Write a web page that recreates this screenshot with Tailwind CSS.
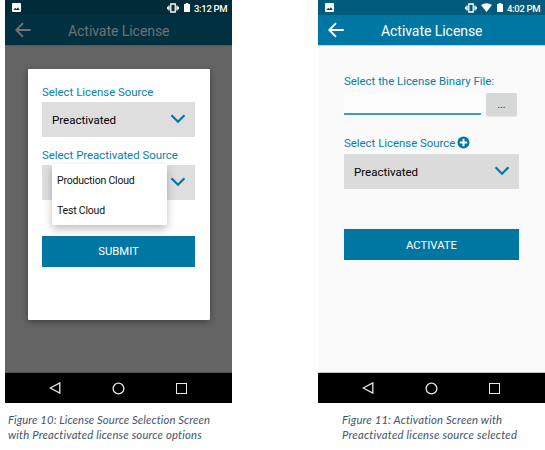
<!DOCTYPE html>
<html lang="en">
<head>
<meta charset="utf-8">
<title>Activate License</title>
<script src="https://cdn.jsdelivr.net/npm/@tailwindcss/browser@4"></script>
</head>
<body class="w-[545px] h-[450px] overflow-hidden bg-white font-[Roboto,sans-serif] whitespace-nowrap">
<svg class="hidden">
  <symbol id="photo" viewBox="0 0 9 9"><rect width="9" height="9" rx="1" fill="currentColor"/><path d="M1.4 7 3.2 4.8l1.2 1.3L6 4.2 7.7 7z" fill="#003f55"/></symbol>
  <symbol id="vibrate" viewBox="0 0 12 10"><path d="M3.8 1h4.4v8H3.8zM2 2.5v5M10 2.5v5M.6 3.8v2.4M11.4 3.8v2.4" fill="none" stroke="currentColor" stroke-width="1.3"/></symbol>
  <symbol id="battery" viewBox="0 0 6 9"><path d="M0 1h1.7V0h2.6v1H6v8H0z" fill="currentColor"/></symbol>
  <symbol id="back" viewBox="0 0 16 16"><path d="M15.7 8H1.5M8 1.2 1.3 8 8 14.8" fill="none" stroke="currentColor" stroke-width="1.9"/></symbol>
  <symbol id="chevron" viewBox="0 0 16 10"><path d="M1.5 1.3 8 7.8l6.5-6.5" fill="none" stroke="currentColor" stroke-width="2.2"/></symbol>
  <symbol id="navback" viewBox="0 0 12 12"><path d="M10.8.9v10.2L1.2 6z" fill="none" stroke="currentColor" stroke-width="1.3"/></symbol>
</svg>
<main class="flex justify-between pl-[5px]">
  <section class="w-[227px]">
    <div class="flex h-[403px] flex-col">
      <div class="flex h-[15px] items-center bg-[#012b39] pl-[7px] pr-[5px] text-white">
        <svg class="h-[9px] w-[9px]"><use href="#photo"/></svg>
        <svg class="ml-auto h-[10px] w-[12px]"><use href="#vibrate"/></svg>
        <svg class="ml-[5px] mr-[4px] h-[9px] w-[6px]"><use href="#battery"/></svg>
        <span class="w-[33px] pt-[2px] text-[9.5px] font-medium leading-[14px] tracking-[-0.3px]">3:12 PM</span>
      </div>
      <div class="flex h-[30px] items-center bg-[#013141] pl-[10px] text-[#6f7374]">
        <svg class="h-4 w-4"><use href="#back"/></svg>
        <h1 class="ml-[37px] pt-px text-[14px] leading-5 tracking-[-0.05px]">Activate License</h1>
      </div>
      <div class="flex-1 border-t border-b border-t-[#53595b] border-b-[#505050] bg-[#646464] pl-[22.5px] pt-[22.5px]">
        <div class="flex h-[251px] w-[182px] flex-col rounded-[1px] bg-white px-[14.5px] pt-[17px] shadow-[0_2px_6px_rgba(0,0,0,.35)]">
          <label class="h-[16.5px] text-[11.4px] leading-[12px] text-[#087fa8]">Select License Source</label>
          <div class="flex h-[35px] items-center justify-between bg-[#dedede] pl-[10px] pr-[9px] text-[11.5px] text-black"><span class="pt-[2px]">Preactivated</span><svg class="mb-px h-[10px] w-4 text-[#0077a2]"><use href="#chevron"/></svg></div>
          <label class="mt-[12px] h-[16px] text-[11.4px] leading-[12px] text-[#087fa8]">Select Preactivated Source</label>
          <div class="relative flex h-[35px] items-center justify-end bg-[#dedede] pr-[9px]">
            <svg class="mb-[2px] h-[10px] w-4 text-[#0077a2]"><use href="#chevron"/></svg>
            <ul class="absolute -top-px left-[10px] h-[61px] w-[115px] rounded-[1px] bg-white px-[5px] text-[10.5px] leading-[30px] tracking-[-0.2px] text-[#111] shadow-[0_4px_8px_rgba(0,0,0,.25)]"><li class="pt-[2px]">Production Cloud</li><li>Test Cloud</li></ul>
          </div>
          <button class="mt-[36px] h-[30.5px] bg-[#0077a2] pt-[3px] text-[11.3px] text-white">SUBMIT</button>
        </div>
      </div>
      <nav class="flex h-[30px] items-center bg-black pl-[44px] text-[#e8e8e8]">
        <svg class="h-3 w-3"><use href="#navback"/></svg>
        <svg class="ml-[51px] h-[13px] w-[13px]" viewBox="0 0 13 13"><circle cx="6.5" cy="6.5" r="5.4" fill="none" stroke="currentColor" stroke-width="1.3"/></svg>
        <span class="ml-[51px] h-[11px] w-[11px] border border-current"></span>
      </nav>
    </div>
    <p class="pl-[3px] pt-[9px] font-[Lato,sans-serif] text-[11.3px] italic leading-[15px] tracking-[0.1px] text-[#44546a]"><span>Figure 10: License Source Selection Screen</span><br><span class="tracking-[0.17px]">with Preactivated license source options</span></p>
  </section>
  <section class="w-[227px]">
    <div class="flex h-[403px] flex-col">
      <div class="flex h-[15px] items-center bg-[#005b7c] pl-[7px] pr-[5px] text-white">
        <svg class="h-[9px] w-[9px]"><use href="#photo"/></svg>
        <svg class="ml-auto h-[10px] w-[12px]"><use href="#vibrate"/></svg>
        <svg class="ml-[4px] h-[9px] w-[11px]" viewBox="0 0 11 9"><path d="M0 2Q5.5-1.6 11 2L5.5 9z" fill="currentColor"/></svg>
        <svg class="ml-[5px] mr-[4px] h-[9px] w-[6px]"><use href="#battery"/></svg>
        <span class="w-[33px] pt-[2px] text-[9.5px] font-medium leading-[14px] tracking-[-0.3px]">4:02 PM</span>
      </div>
      <div class="flex h-[30px] items-center bg-[#0077a2] pl-[10px] text-white">
        <svg class="h-4 w-4"><use href="#back"/></svg>
        <h1 class="ml-[37px] pt-px text-[14px] leading-5 tracking-[-0.05px]">Activate License</h1>
      </div>
      <div class="flex flex-1 flex-col border-t border-b border-t-[#bfd5dd] border-b-[#c4c4c4] bg-[#fafafa] px-[26px] pt-[29px]">
        <label class="h-[18px] text-[11.4px] leading-[13px] text-[#087fa8]">Select the License Binary File:</label>
        <div class="flex h-[24px] gap-[5px]">
          <input class="h-[22px] w-[137px] border-b-2 border-[#3da0c3] bg-[#fdfdfd]">
          <button class="h-[23px] w-[31px] rounded-[2px] bg-[#d6d7d7] text-[10px] text-[#222] shadow-[0_1px_1px_rgba(0,0,0,.08)]">...</button>
        </div>
        <label class="mt-[20px] flex h-[17px] items-start text-[11.4px] leading-[13px] text-[#087fa8]">Select License Source
          <svg class="-mt-px ml-[2px] h-[13px] w-[13px]" viewBox="0 0 13 13"><circle cx="6.5" cy="6.5" r="6" fill="#0077a2"/><path d="M6.5 2.8v7.4M2.8 6.5h7.4" stroke="#fff" stroke-width="2"/></svg>
        </label>
        <div class="flex h-[35px] w-[175px] items-center justify-between bg-[#dbdbdb] pl-[10px] pr-[9px] text-[11.5px] text-black"><span class="pt-[2px]">Preactivated</span><svg class="mb-px h-[10px] w-4 text-[#0077a2]"><use href="#chevron"/></svg></div>
        <button class="mt-[40px] h-[31px] w-[175px] bg-[#0077a2] pt-[3px] text-[11.3px] text-white">ACTIVATE</button>
      </div>
      <nav class="flex h-[30px] items-center bg-black pl-[44px] text-[#e8e8e8]">
        <svg class="h-3 w-3"><use href="#navback"/></svg>
        <svg class="ml-[51px] h-[13px] w-[13px]" viewBox="0 0 13 13"><circle cx="6.5" cy="6.5" r="5.4" fill="none" stroke="currentColor" stroke-width="1.3"/></svg>
        <span class="ml-[51px] h-[11px] w-[11px] border border-current"></span>
      </nav>
    </div>
    <p class="pl-[24px] pt-[9px] font-[Lato,sans-serif] text-[11.3px] italic leading-[15px] tracking-[0.15px] text-[#44546a]"><span>Figure 11: Activation Screen with</span><br><span class="tracking-[0.22px]">Preactivated license source selected</span></p>
  </section>
</main>
</body>
</html>
